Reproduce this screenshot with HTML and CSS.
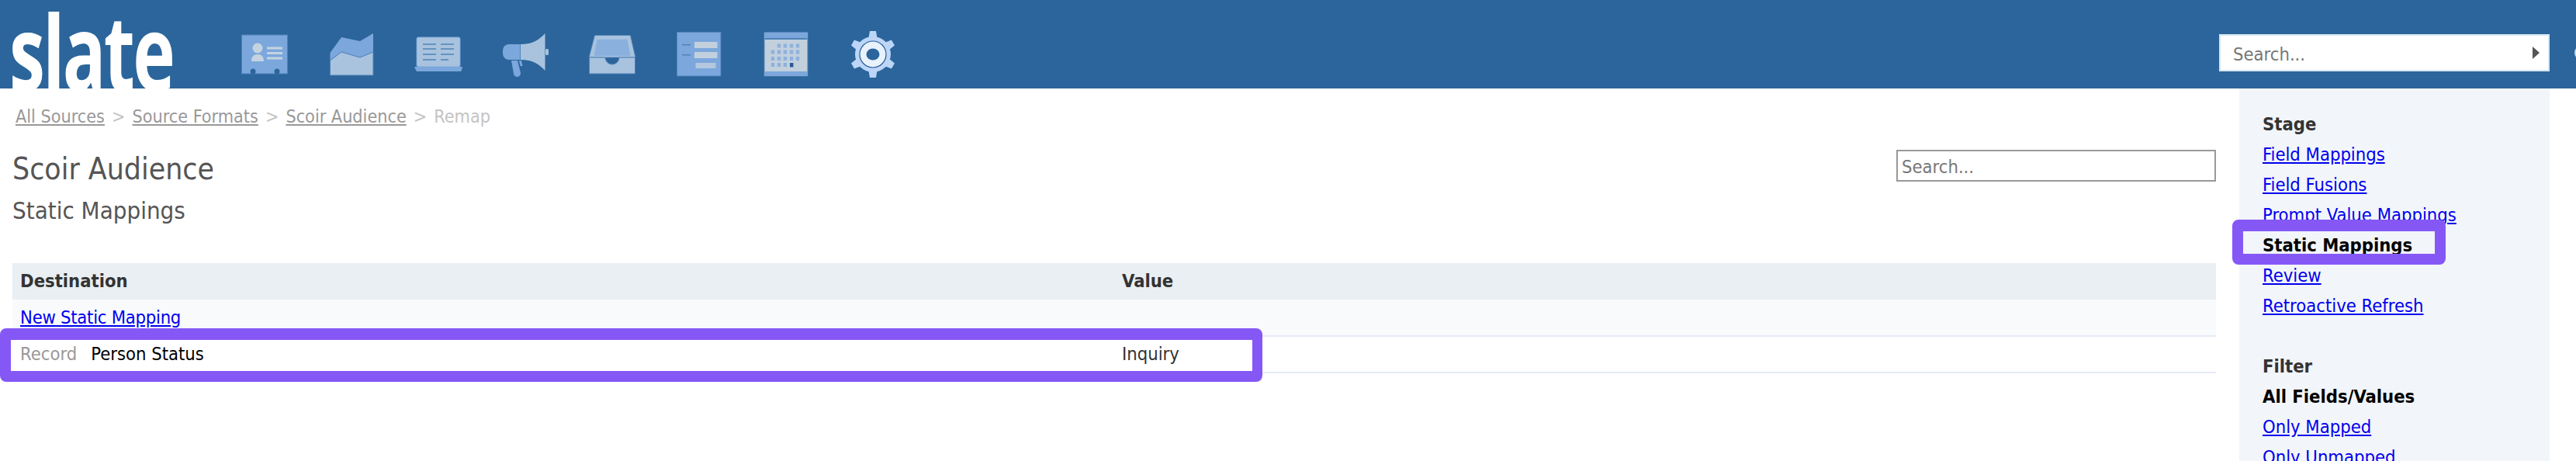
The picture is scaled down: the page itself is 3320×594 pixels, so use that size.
FILE: index.html
```html
<!DOCTYPE html>
<html lang="en">
<head>
<meta charset="utf-8">
<title>Scoir Audience - Static Mappings</title>
<link rel="stylesheet" href="styles.css">
</head>
<body>
<header class="topbar">
  <div class="logo"><span class="logo-text">slate</span></div>
  <nav class="icons">
    <svg class="icon" viewBox="0 0 60 60"><rect x="0.5" y="5" width="59" height="50" fill="#7ba7dc" stroke="#4f82b8"/><circle cx="21" cy="22" r="6.5" fill="#c5d3e0"/><path d="M13 39c0-6 3-9 8-9s8 3 8 9z" fill="#c5d3e0"/><path d="M33 22h20M33 28.500h20M33 35h20" stroke="#c5d3e0" stroke-width="3"/><circle cx="15" cy="52" r="3.500" fill="#2b659b"/><circle cx="46" cy="52" r="3.500" fill="#2b659b"/></svg>
    <svg class="icon" viewBox="0 0 60 60"><path d="M2.500 28L17 8l24 5 17-10v24l-17 7-24-7-14.500 11z" fill="#7ba7dc"/><path d="M2.500 38L17 27l24 7 17-7v30H2.500z" fill="#a9c3de" stroke="#4f82b8"/></svg>
    <svg class="icon" viewBox="0 0 60 60"><rect x="2" y="8" width="56" height="38" rx="2" fill="#a9c3de" stroke="#7ba7dc"/><path d="M-1 46h62l-1 4.500a2 2 0 0 1-2 1.500H3a2 2 0 0 1-2-1.500z" fill="#7ba7dc"/><path d="M10 17h17M33 17h17M10 23h17M33 23h17M10 30h17M33 30h17M10 37h17M33 37h10" stroke="#4f82b8" stroke-width="1.300"/></svg>
    <svg class="icon" viewBox="0 0 60 60"><path d="M12 38l3 17a4 4 0 0 0 9-1l-4-16z" fill="#7ba7dc"/><path d="M22 38l1.500 7h3L25 38z" fill="#7ba7dc"/><path d="M23.500 17H9a8 8 0 0 0-8 8v4a8 8 0 0 0 8 8h14.500z" fill="#7ba7dc"/><path d="M24 17c16 0 24-6 31.500-14v48C48 43 40 37 24 37z" fill="#a9c3de"/><rect x="56" y="23" width="4" height="8" rx="1.500" fill="#a9c3de"/></svg>
    <svg class="icon" viewBox="0 0 60 60"><path d="M7.500 5.500h46L60 34H0z" fill="#a9c3de" stroke="#4f82b8"/><path d="M10.600 10.700h38.800L53.500 32h-47z" fill="#8ab0de"/><path d="M0.500 34h20.500a9 9 0 0 0 18 0h20.500v21H0.500z" fill="#a9c3de" stroke="#4f82b8"/></svg>
    <svg class="icon" viewBox="0 0 60 60"><rect x="1.500" y="1.500" width="56.500" height="56.500" fill="#7ba7dc" stroke="#4f82b8"/><rect x="24" y="14" width="29.500" height="8" fill="#c2d0de"/><rect x="24" y="27" width="29.500" height="8" fill="#c2d0de"/><rect x="25.500" y="41" width="26" height="7" fill="#b3c7de"/><path d="M8 17.700h11M8 30.700h11" stroke="#4f82b8" stroke-width="1.500"/></svg>
    <svg class="icon" viewBox="0 0 60 60"><rect x="2" y="1.500" width="56" height="56.500" fill="#c2d0de" stroke="#4f82b8"/><rect x="2.500" y="2" width="55" height="7" fill="#7ba7dc"/><rect x="2.500" y="9" width="55" height="2" fill="#4f82b8"/><rect x="2.500" y="52" width="55" height="5.500" fill="#7ba7dc"/><path d="M21 16.500v5M29 16.500v5M37 16.500v5M45 16.500v5M13 24.500v5M21 24.500v5M29 24.500v5M37 24.500v5M45 24.500v5M13 33v5M21 33v5M29 33v5M37 33v5M45 33v5M13 41v5M21 41v5M29 41v5" stroke="#8fb1dc" stroke-width="4.500"/><rect x="35" y="41" width="4.500" height="5.500" fill="#2b5a96"/></svg>
    <svg class="icon" viewBox="0 0 60 60"><g fill="#bcd6f8"><circle cx="30" cy="30" r="23"/><path d="M26 0h8l1.500 9h-11z"/><path d="M26 0h8l1.500 9h-11z" transform="rotate(60 30 30)"/><path d="M26 0h8l1.500 9h-11z" transform="rotate(120 30 30)"/><path d="M26 0h8l1.500 9h-11z" transform="rotate(180 30 30)"/><path d="M26 0h8l1.500 9h-11z" transform="rotate(240 30 30)"/><path d="M26 0h8l1.500 9h-11z" transform="rotate(300 30 30)"/></g><circle cx="30" cy="30" r="17" fill="#e8f2fd" stroke="#2b5a96" stroke-width="1.200"/><ellipse cx="30" cy="30" rx="8.500" ry="7.500" fill="#2b659b"/></svg>
  </nav>
  <div class="top-search">
    <input class="top-search-input" type="text" placeholder="Search...">
    <span class="top-search-arrow"></span>
  </div>
  <span class="avatar"></span>
</header>
<div class="page">
  <main class="main">
    <div class="crumbs"><a href="#">All Sources</a><span class="sep">&gt;</span><a href="#">Source Formats</a><span class="sep">&gt;</span><a href="#">Scoir Audience</a><span class="sep">&gt;</span><span class="current">Remap</span></div>
    <div class="title-row">
      <div>
        <h1 class="title">Scoir Audience</h1>
        <h2 class="subtitle">Static Mappings</h2>
      </div>
      <input class="content-search" type="text" placeholder="Search...">
    </div>
    <table class="grid">
      <thead><tr><th class="col-dest">Destination</th><th>Value</th></tr></thead>
      <tbody>
        <tr class="row-new"><td><a href="#">New Static Mapping</a></td><td></td></tr>
        <tr><td><span class="kind">Record</span><span class="name">Person Status</span></td><td class="val">Inquiry</td></tr>
      </tbody>
    </table>
  </main>
  <aside class="side">
    <h3 class="side-head">Stage</h3>
    <a class="side-item" href="#">Field Mappings</a>
    <a class="side-item" href="#">Field Fusions</a>
    <a class="side-item" href="#">Prompt Value Mappings</a>
    <b class="side-item side-on">Static Mappings</b>
    <a class="side-item" href="#">Review</a>
    <a class="side-item" href="#">Retroactive Refresh</a>
    <h3 class="side-head side-head-gap">Filter</h3>
    <b class="side-item side-on">All Fields/Values</b>
    <a class="side-item" href="#">Only Mapped</a>
    <a class="side-item" href="#">Only Unmapped</a>
  </aside>
</div>
<div class="mark mark-row"></div>
<div class="mark mark-side"></div>
</body>
</html>
```
FILE: styles.css
```css
* { box-sizing: border-box; }
html, body { margin: 0; padding: 0; height: 594px; overflow: hidden; background: #fff; }
body { position: relative; font: 23.6px/39px "DejaVu Sans Condensed", "DejaVu Sans", sans-serif; color: #333; }
a { color: #0000ee; }

.topbar { display: flex; align-items: flex-start; height: 114px; background: #2b659b; overflow: hidden; }
.logo { flex: 0 0 311px; height: 114px; overflow: hidden; padding-left: 12px; }
.logo-text { display: block; font: 700 135px/114px "Open Sans", sans-serif; letter-spacing: -4px; color: #fff; transform: scaleX(0.685); transform-origin: left; margin-top: 8px; }
.icons { display: flex; gap: 52px; padding-top: 40px; }
.icon { display: block; width: 60px; height: 60px; overflow: visible; flex: none; }

.top-search { position: relative; margin: 44px 0 0 auto; width: 426px; height: 48px; }
.top-search-input { display: block; width: 100%; height: 100%; border: 2px solid #d5e6f3; background: #fff; padding: 3px 16px 0; font: inherit; color: #333; border-radius: 0; }
.top-search-input::placeholder, .content-search::placeholder { color: #777; opacity: 1; }
.top-search-arrow { position: absolute; left: 404px; top: 16px; border-left: 9px solid #555; border-top: 8px solid transparent; border-bottom: 8px solid transparent; }
.avatar { flex: none; width: 18px; height: 18px; border-radius: 50%; background: #c9d9ea; margin: 59px -16px 0 32px; }

.page { display: flex; height: 480px; }
.main { flex: 1; min-width: 0; padding: 15px 30px 0 16px; }
.crumbs { padding: 1px 0 0 4px; height: 39px; font-size: 23.2px; color: #bbb; white-space: nowrap; }
.crumbs a { color: #999; }
.sep { margin: 0 9px; color: #c4c4c4; }
.current { color: #c4c4c4; }
.title-row { display: flex; justify-content: space-between; align-items: flex-start; height: 171px; padding-top: 25px; }
.title { margin: 2px 0 0; font-size: 38.8px; line-height: 46px; font-weight: 400; color: #555; }
.subtitle { margin: 8px 0 0; font-size: 31px; line-height: 44px; font-weight: 400; color: #555; }
.content-search { display: block; width: 412px; height: 41px; margin-top: 0; border: 2px solid #999; background: #fff; padding: 3px 5px 0; font: inherit; border-radius: 0; }
.grid { width: 100%; border-collapse: collapse; table-layout: fixed; }
.grid th { height: 47px; padding: 0 10px; background: #e9eff3; text-align: left; font-weight: 700; color: #333; }
.grid th.col-dest { width: 1420px; }
.grid td { height: 47px; padding: 0 10px; border-bottom: 2px solid #e6ebf8; color: #000; }
.row-new td { background: #f8fafc; }
.row-new a { letter-spacing: -0.25px; }
.kind { color: #999; margin-right: 18px; }
.val { color: #333 !important; }

.side { flex: 0 0 400px; margin-right: 34px; padding: 27px 30px 0; background: #f2f5f9; }
.side-head { margin: 0; font-size: inherit; line-height: 39px; font-weight: 700; color: #333; }
.side-head-gap { margin-top: 39px; }
.side-item { display: block; line-height: 39px; white-space: nowrap; }
.side-on { color: #000; }

.mark { position: absolute; border: solid #8558f6; border-radius: 8px; pointer-events: none; }
.mark-row { left: 0; top: 423px; width: 1627px; height: 69px; border-width: 15px 13px 14px 14px; }
.mark-side { left: 2877px; top: 283px; width: 275px; height: 58px; border-width: 15px 14px 14px 14px; }
```
